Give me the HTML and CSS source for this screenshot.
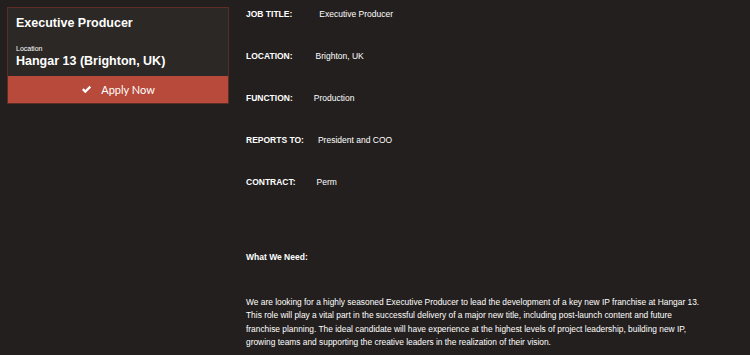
FILE: index.html
```html
<!DOCTYPE html>
<html>
<head>
<meta charset="utf-8">
<link rel="stylesheet" href="styles.css">
</head>
<body>
<div class="page">
  <aside class="sidebar">
    <div class="card">
      <div class="card-body">
        <h1 class="card-title">Executive Producer</h1>
        <div class="loc-label">Location</div>
        <div class="loc-value">Hangar 13 (Brighton, UK)</div>
      </div>
      <a class="apply" href="#">
        <svg class="check" viewBox="0 0 16 16" width="11" height="11"><path d="M1.5 8.6 L3.8 6.3 L6.3 8.8 L12.4 2.7 L14.7 5 L6.3 13.4 Z" fill="#fff"/></svg>
        <span>Apply Now</span>
      </a>
    </div>
  </aside>
  <main class="details">
    <div class="row"><span class="label">JOB TITLE:</span><span class="value v1">Executive Producer</span></div>
    <div class="row"><span class="label">LOCATION:</span><span class="value v2">Brighton, UK</span></div>
    <div class="row"><span class="label">FUNCTION:</span><span class="value v3">Production</span></div>
    <div class="row"><span class="label">REPORTS TO:</span><span class="value v4">President and COO</span></div>
    <div class="row"><span class="label">CONTRACT:</span><span class="value v5">Perm</span></div>
    <h2 class="section">What We Need:</h2>
    <p class="desc">We are looking for a highly seasoned Executive Producer to lead the development of a key new IP franchise at Hangar 13. This role will play a vital part in the successful delivery of a major new title, including post-launch content and future franchise planning. The ideal candidate will have experience at the highest levels of project leadership, building new IP, growing teams and supporting the creative leaders in the realization of their vision.</p>
  </main>
</div>
</body>
</html>
```
FILE: styles.css
```css
html, body {
  margin: 0;
  padding: 0;
  background: #231f1e;
  color: #fff;
  font-family: "Liberation Sans", Arial, sans-serif;
}
.page {
  display: flex;
  padding: 7px 0 0 7px;
  gap: 17px;
}
.sidebar {
  width: 222px;
  flex: none;
}
.card {
  border: 1px solid #5c2c26;
  background: #2c2826;
}
.card-body {
  padding: 8px 8px 7px 8px;
}
.card-title {
  margin: 0;
  font-size: 12.5px;
  font-weight: bold;
  line-height: 15px;
}
.loc-label {
  margin-top: 13px;
  font-size: 7px;
  line-height: 9px;
}
.loc-value {
  margin-top: 1px;
  font-size: 12.5px;
  font-weight: bold;
  line-height: 15px;
}
.apply {
  display: flex;
  align-items: center;
  justify-content: center;
  gap: 9px;
  height: 27px;
  background: #b74a3a;
  color: #fff;
  text-decoration: none;
  font-family: Lato, "Open Sans", sans-serif;
  font-size: 11px;
}
.details {
  flex: 1;
  padding-top: 2px;
}
.row {
  height: 42px;
  font-size: 8.5px;
  line-height: 11px;
}
.label {
  font-weight: bold;
}
.value.v1 { margin-left: 27px; }
.value.v2 { margin-left: 23px; }
.value.v3 { margin-left: 21px; }
.value.v4 { margin-left: 14px; }
.value.v5 { margin-left: 21px; }
.section {
  margin: 33px 0 0 0;
  font-size: 8.5px;
  font-weight: bold;
  line-height: 11px;
}
.desc {
  margin: 33px 0 0 0;
  max-width: 458px;
  font-size: 8.4px;
  line-height: 13.3px;
}
```
